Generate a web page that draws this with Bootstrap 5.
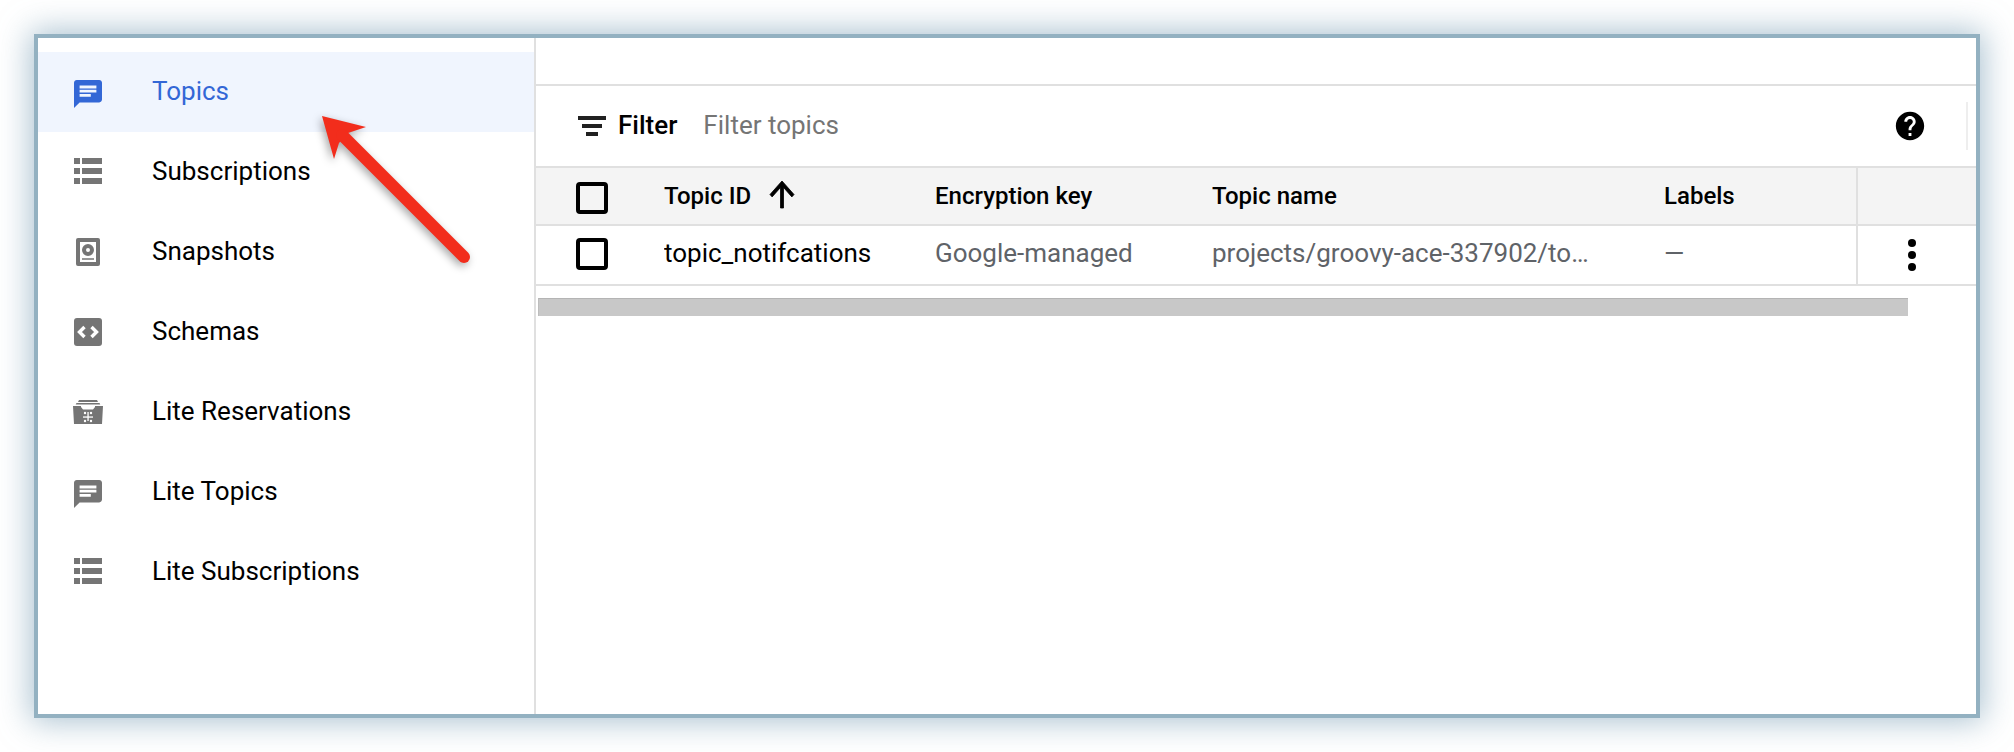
<!DOCTYPE html>
<html lang="en">
<head>
<meta charset="utf-8">
<title>Topics</title>
<link href="https://cdn.jsdelivr.net/npm/bootstrap@5.3.0/dist/css/bootstrap.min.css" rel="stylesheet">
<style>
html,body{height:752px;overflow:hidden;background:#fff}
body{font-family:Roboto,"Liberation Sans",sans-serif;font-size:26px;color:#000;padding:34px}
.shot-frame{position:relative;width:1946px;height:684px;border:4px solid #93b1c1;box-shadow:0 0 30px 3px rgba(110,150,175,.6);background:#fff}
.side-pane{width:498px;border-right:2px solid #e0e0e0;padding-top:14px;flex:none}
.side-item{height:80px;padding-left:33px;gap:47px;color:#000;text-decoration:none}
.side-item span{position:relative;top:-1px}
.side-item svg{width:34px;height:34px;fill:#757575;flex:none}
.side-item.is-active{background:#f0f5fe;color:#3367d6}
.side-item.is-active svg{fill:#3367d6}
.main-pane{min-width:0}
.top-gap{height:48px;border-bottom:2px solid #e0e0e0}
.filter-row{height:82px;border-bottom:2px solid #e0e0e0;padding-left:42px}
.filter-ico{width:28px;height:20px;fill:#212121;margin-right:12px}
.filter-label{font-weight:500;margin-right:26px;position:relative;top:-1px}
.filter-hint{color:#757575;position:relative;top:-1px}
.help-ico{width:34px;height:34px;margin-right:39px;flex:none}
.tool-sep{width:2px;height:48px;background:#eee;margin-right:8px;flex:none}
.topic-grid{table-layout:fixed;width:1440px;margin:0;border-collapse:separate;border-spacing:0;--bs-table-bg:transparent}
.topic-grid th,.topic-grid td{padding:0;vertical-align:middle;border-bottom:2px solid #e0e0e0;white-space:nowrap;overflow:hidden;color:#000}
.topic-grid thead tr{height:58px;background:#f4f4f4}
.topic-grid tbody tr{height:60px}
.topic-grid th{font-weight:500;font-size:24px;padding-bottom:1px}
.topic-grid td{padding-bottom:4px}
.topic-grid td.soft{color:#5f6368}
.topic-grid .c-check{width:128px;padding:0 0 0 40px}
.topic-grid td.c-check{padding-bottom:2px}
.c-id{width:271px}
.c-enc{width:277px}
.c-name{width:452px}
.c-lab{width:192px}
.topic-grid .c-act{width:120px;border-left:2px solid #e0e0e0;padding:0}
.tick-box{display:block;width:32px;height:32px;border:4px solid #000;border-radius:4px}
.head-tick{position:relative;top:2px}
.sort-ico{width:24px;height:27px;margin-left:19px;vertical-align:-4px;overflow:visible}
.sort-ico path{stroke:#000;stroke-width:.5}
.kebab{width:8px;height:32px;margin-left:50px;display:block}
.fake-scroll{height:18px;width:1370px;margin:12px 0 0 2px;background:#c8c8c8;border-top:1px solid #b4b4b4;border-left:1px solid #bdbdbd}
.note-arrow{position:absolute;left:262px;top:62px;width:220px;height:180px;overflow:visible;filter:drop-shadow(-2px 3px 4px rgba(0,0,0,.35))}
</style>
</head>
<body>
<svg width="0" height="0" class="d-block position-absolute">
  <defs>
    <symbol id="i-chat" viewBox="0 0 34 34"><g transform="translate(.2 2.2) scale(1.4)"><path d="M20 2H4c-1.1 0-1.99.9-1.99 2L2 22l4-4h14c1.1 0 2-.9 2-2V4c0-1.1-.9-2-2-2zM6 9h12v2H6V9zm8 5H6v-2h8v2zm4-6H6V6h12v2z"/></g></symbol>
    <symbol id="i-list" viewBox="0 0 34 34"><path d="M3 3h6v6H3zM11 3h20v6H11zM3 13h6v6H3zM11 13h20v6H11zM3 23h6v6H3zM11 23h20v6H11z"/></symbol>
  </defs>
</svg>
<div class="shot-frame d-flex">
  <nav class="side-pane d-flex flex-column">
    <a class="side-item is-active d-flex align-items-center" href="#"><svg><use href="#i-chat"/></svg><span>Topics</span></a>
    <a class="side-item d-flex align-items-center" href="#"><svg><use href="#i-list"/></svg><span>Subscriptions</span></a>
    <a class="side-item d-flex align-items-center" href="#"><svg viewBox="0 0 34 34"><path fill-rule="evenodd" d="M7 3h20a2 2 0 0 1 2 2v24a2 2 0 0 1-2 2H7a2 2 0 0 1-2-2V5a2 2 0 0 1 2-2zm2 4v20h16V7zM17 9a6 6 0 1 1 0 12 6 6 0 0 1 0-12zm0 4a2 2 0 1 0 0 4 2 2 0 0 0 0-4zM11 23.2h12v1.6H11z"/></svg><span>Snapshots</span></a>
    <a class="side-item d-flex align-items-center" href="#"><svg viewBox="0 0 34 34"><rect x="3" y="3" width="28" height="28" rx="3"/><path d="M13.500 12 8.500 17l5 5M20.500 12l5 5-5 5" fill="none" stroke="#fff" stroke-width="3.400"/></svg><span>Schemas</span></a>
    <a class="side-item d-flex align-items-center" href="#"><svg viewBox="0 0 34 34"><path d="M8 5h18l1 2H7zM5.500 8h23l.8 1.500H4.700zM2 11h8v1l2 2.500h10l2-2.500v-1h8l-1 18H3z"/><g fill="#fff"><circle cx="14" cy="18" r="1.200"/><circle cx="20" cy="18" r="1.200"/><circle cx="14" cy="26" r="1.200"/><circle cx="20" cy="26" r="1.200"/><rect x="12" y="21.400" width="10" height="1.300"/><rect x="16.400" y="17" width="1.300" height="9"/></g></svg><span>Lite Reservations</span></a>
    <a class="side-item d-flex align-items-center" href="#"><svg><use href="#i-chat"/></svg><span>Lite Topics</span></a>
    <a class="side-item d-flex align-items-center" href="#"><svg><use href="#i-list"/></svg><span>Lite Subscriptions</span></a>
  </nav>
  <main class="main-pane flex-grow-1">
    <div class="top-gap"></div>
    <div class="filter-row d-flex align-items-center">
      <svg class="filter-ico" viewBox="0 0 28 20"><path d="M0 0h28v4H0zM4 8h20v4H4zM8 16h12v4H8z"/></svg>
      <span class="filter-label">Filter</span>
      <span class="filter-hint flex-grow-1">Filter topics</span>
      <svg class="help-ico" viewBox="0 0 24 24"><path d="M12 2C6.480 2 2 6.480 2 12s4.480 10 10 10 10-4.480 10-10S17.520 2 12 2zm1 17h-2v-2h2v2zm2.070-7.750l-.9.920C13.450 12.900 13 13.500 13 15h-2v-.5c0-1.100.45-2.100 1.170-2.830l1.240-1.260c.37-.36.59-.86.59-1.410 0-1.100-.9-2-2-2s-2 .9-2 2H8c0-2.210 1.790-4 4-4s4 1.790 4 4c0 .88-.36 1.680-.93 2.250z"/></svg>
      <span class="tool-sep"></span>
    </div>
    <table class="table topic-grid">
      <thead>
        <tr>
          <th class="c-check"><span class="tick-box head-tick"></span></th>
          <th class="c-id">Topic ID<svg class="sort-ico" viewBox="4 4 16 16" preserveAspectRatio="none"><path d="M4 12l1.410 1.410L11 7.830V20h2V7.830l5.580 5.590L20 12l-8-8-8 8z"/></svg></th>
          <th class="c-enc">Encryption key</th>
          <th class="c-name">Topic name</th>
          <th class="c-lab">Labels</th>
          <th class="c-act"></th>
        </tr>
      </thead>
      <tbody>
        <tr>
          <td class="c-check"><span class="tick-box"></span></td>
          <td>topic_notifcations</td>
          <td class="soft">Google-managed</td>
          <td class="soft">projects/groovy-ace-337902/to…</td>
          <td class="soft">—</td>
          <td class="c-act"><svg class="kebab" viewBox="0 0 8 32"><circle cx="4" cy="4" r="4"/><circle cx="4" cy="16" r="4"/><circle cx="4" cy="28" r="4"/></svg></td>
        </tr>
      </tbody>
    </table>
    <div class="fake-scroll"></div>
  </main>
  <svg class="note-arrow" viewBox="300 100 220 180" aria-hidden="true">
    <path d="M322 116 366 127 348 133 339 143 334 159Z" fill="#f22d1c"/>
    <line x1="342" y1="135" x2="464" y2="257" stroke="#f22d1c" stroke-width="12" stroke-linecap="round"/>
  </svg>
</div>
</body>
</html>
